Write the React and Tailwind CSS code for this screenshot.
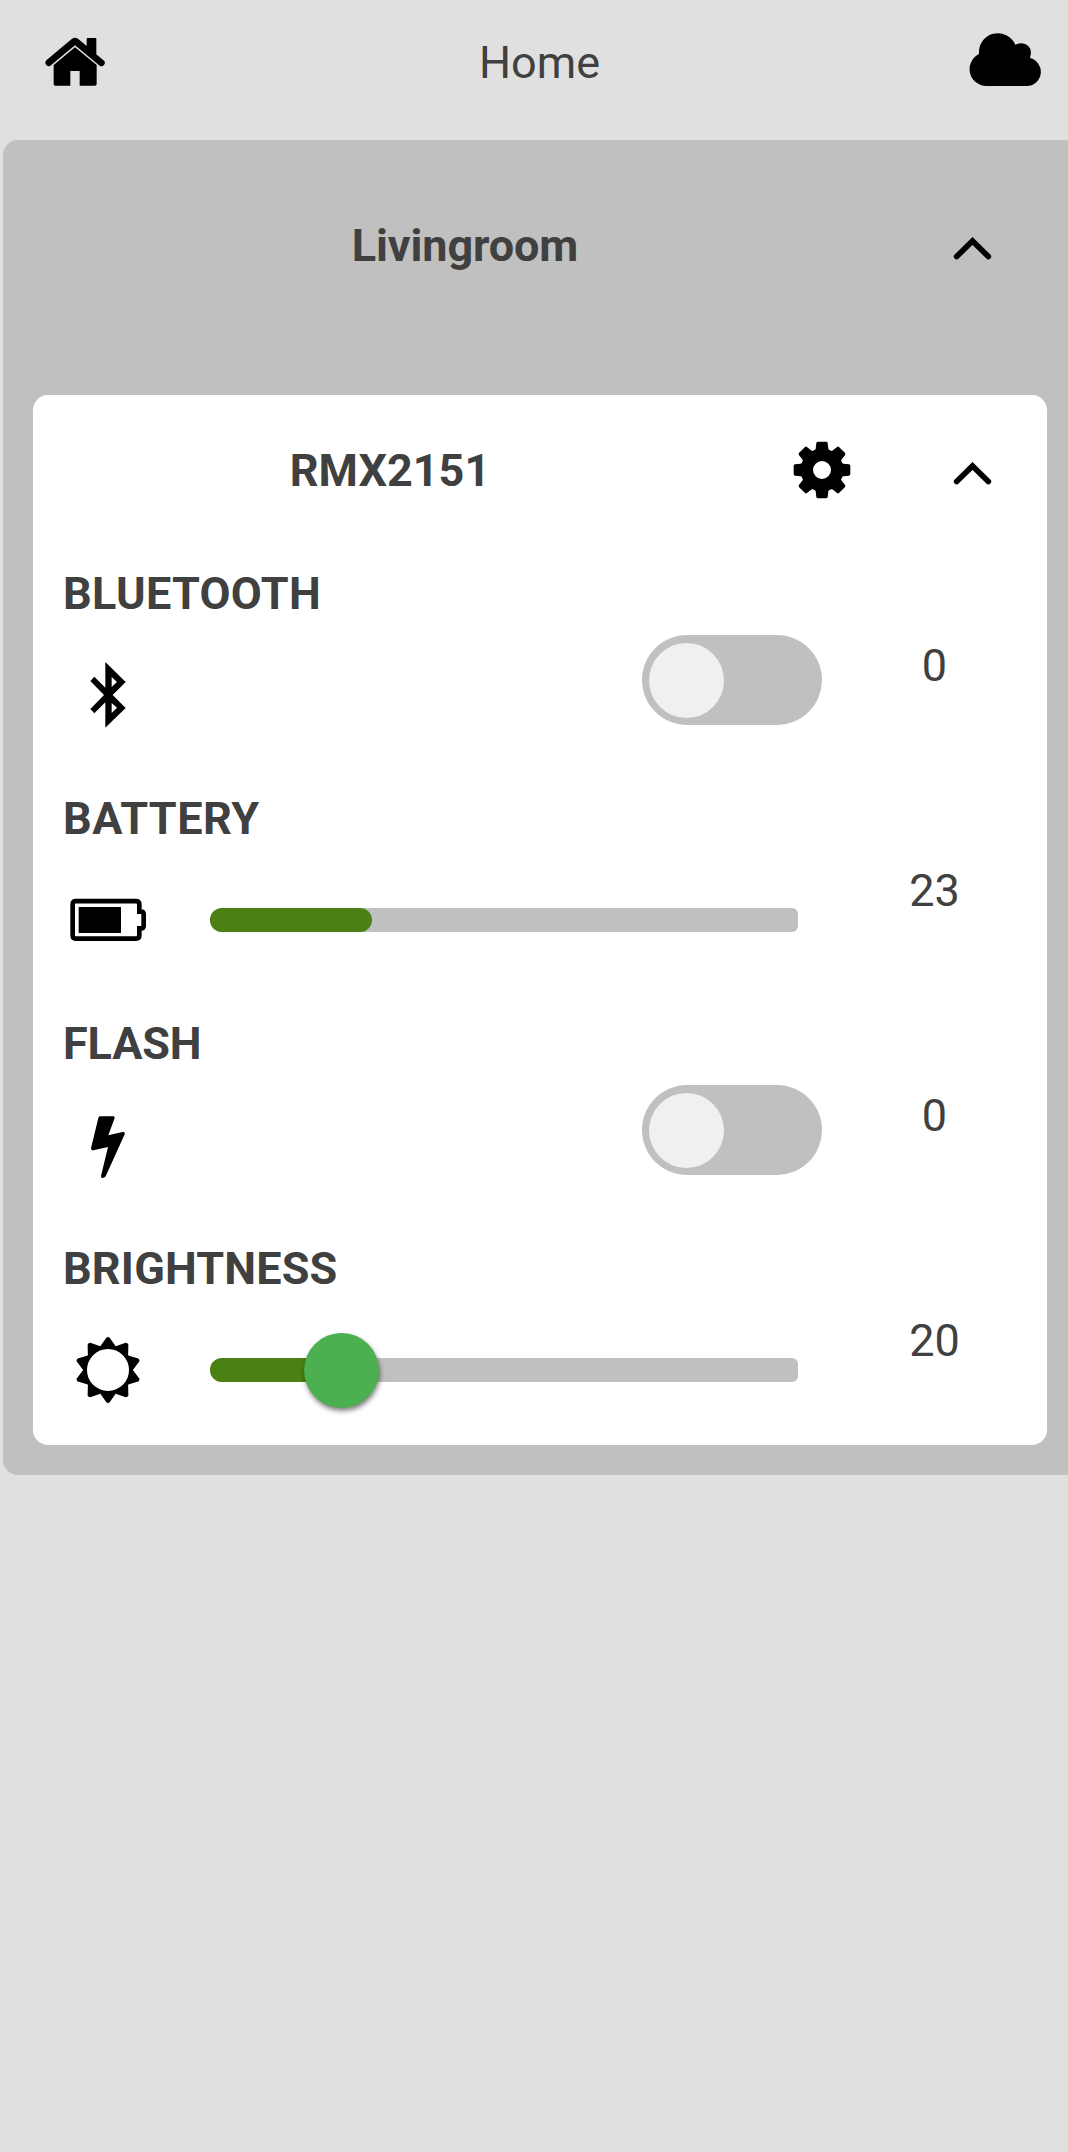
import React from "react";

const HomeIcon = () => (
  <svg className="h-[50px] w-[60px]" viewBox="135 111 180 150">
    <path d="M139 181 L216 116 Q225 110 234 116 L260 138 V117 Q260 114 263 114 H286 Q289 114 289 117 V163 L313 183 Q317 189 312 195 Q306 202 299 197 L225 136 L151 197 Q145 201 139 195 Q133 188 139 181 Z" />
    <path d="M225 142 L290 195 V252 Q290 257 285 257 H239 V213 H211 V257 H166 Q161 257 161 252 V195 Z" />
  </svg>
);

const CloudIcon = () => (
  <svg className="h-[54px] w-[72px]" viewBox="603 98 216 162">
    <path d="M655 257 A50.6 50.6 0 0 1 633 161 A57 57 0 0 1 742 133 Q751 129 761 129 A28 28 0 0 1 789 157 L786 173 A42.6 42.6 0 0 1 776 257 Z" />
  </svg>
);

const ChevronIcon = () => (
  <svg className="h-[24px] w-[39px]" viewBox="577.5 242 117 72">
    <path d="M588.5 303.5 L636 257 L683.5 303.5" fill="none" stroke="#000" strokeWidth="17" strokeLinecap="round" />
  </svg>
);

const GearIcon = () => (
  <svg className="h-[60px] w-[60px]" viewBox="-90 -90 180 180">
    <path
      fillRule="evenodd"
      d="M0 -64 A64 64 0 1 0 0 64 A64 64 0 1 0 0 -64 Z M0 -27 A27 27 0 1 1 0 27 A27 27 0 1 1 0 -27 Z"
    />
    {[0, 45, 90, 135, 180, 225, 270, 315].map((a) => (
      <path
        key={a}
        transform={`rotate(${a})`}
        d="M-27 -56 Q-20 -58 -19 -64 L-17 -81 Q-16 -85 -12 -85 H12 Q16 -85 17 -81 L19 -64 Q20 -58 27 -56 Z"
      />
    ))}
  </svg>
);

const BluetoothIcon = () => (
  <svg className="h-[68px] w-[38px]" viewBox="147 303 114 204">
    <path
      fillRule="evenodd"
      d="M196 306 L257 366 L218 405 L257 444 L196 503 V427 L163 460 L151 447 L192 405 L151 363 L163 350 L196 383 Z M215 351 V381 L231 366 Z M215 429 V459 L231 443 Z"
    />
  </svg>
);

const BatteryIcon = () => (
  <svg className="h-[44px] w-[78px]" viewBox="87 354 234 132">
    <path
      d="M107 363.5 H288 Q298 363.5 298 373.5 V395 H303 Q311 395 311 403 V437 Q311 445 303 445 H298 V466 Q298 476 288 476 H107 Q98 476 98 466 V373.5 Q98 363.5 107 363.5 Z"
      fill="none"
      stroke="#000"
      strokeWidth="14"
    />
    <path d="M116 381 H243 V459 H116 Z" />
  </svg>
);

const FlashIcon = () => (
  <svg className="h-[68px] w-[36px]" viewBox="150 303 108 204">
    <path d="M180 319 H220 Q225 319 224 324 L205 376 L248 366 Q256 365 254 373 L197 499 Q193 504 187 504 Q182 504 183 498 L204 411 L160 421 Q153 422 153 415 L175 324 Q176 319 180 319 Z" />
  </svg>
);

const SunIcon = () => (
  <svg className="h-[68px] w-[68px]" viewBox="-102 -102 204 204">
    <circle r="69" fill="none" stroke="#000" strokeWidth="12" />
    {[0, 36, 72, 108, 144, 180, 216, 252, 288, 324].map((a) => (
      <path key={a} transform={`rotate(${a})`} d="M-23 -71 L-5 -97 Q0 -101 5 -97 L23 -71 L12 -65 H-12 Z" />
    ))}
  </svg>
);

const Toggle = () => (
  <div className="mt-[4px] ml-auto flex h-[90px] w-[180px] items-center rounded-full bg-[#c0c0c0] px-[7.3px]">
    <div className="size-[75px] rounded-full bg-[#f0f0f0]" />
  </div>
);

const Slider = ({ fill, thumb }) => (
  <div className="mt-[52px] ml-[27px] flex h-[24px] w-[588px] items-center rounded-l-[12px] rounded-r-[6px] bg-[#c0c0c0]">
    <div className="h-[24px] rounded-full bg-[#4b8112]" style={{ width: fill }} />
    {thumb && (
      <div className="-ml-[38px] size-[75px] shrink-0 rounded-full bg-[#4caf50] shadow-[1px_3px_5px_rgba(0,0,0,0.5)]" />
    )}
  </div>
);

const Row = ({ label, spacing, icon, value, children }) => (
  <section className="h-[225px] pt-[11px]">
    <h3 className={`pl-[30px] leading-[75px] font-bold ${spacing}`}>{label}</h3>
    <div className="flex">
      <div className="flex h-[128px] w-[150px] items-center justify-center">{icon}</div>
      <div className="flex w-[639px] items-start">{children}</div>
      <div className="w-[225px] text-center leading-[69px]">{value}</div>
    </div>
  </section>
);

export default function App() {
  return (
    <div className="h-[2152px] w-[1068px] overflow-hidden bg-[#e0e0e0] font-['Roboto',sans-serif] text-[45px] text-[#404040]">
      <header className="flex h-[140px] items-start">
        <div className="w-[150px] pt-[37px] pl-[45px]">
          <HomeIcon />
        </div>
        <h1 className="w-[779px] text-center leading-[125px]">Home</h1>
        <div className="pt-[32.67px] pl-[40px]">
          <CloudIcon />
        </div>
      </header>

      <main className="ml-[3px] h-[1335px] w-[1077px] rounded-[15px] bg-[#c0c0c0] px-[30px]">
        <div className="flex h-[255px] items-start pt-[30px]">
          <h2 className="w-[864px] text-center leading-[151px] font-bold tracking-[-0.1px]">Livingroom</h2>
          <div className="flex h-[156px] w-[150px] items-center justify-center">
            <ChevronIcon />
          </div>
        </div>

        <div className="h-[1050px] w-[1014px] rounded-[15px] bg-white">
          <div className="flex h-[150px] items-start">
            <h2 className="w-[714px] text-center leading-[151px] font-bold">RMX2151</h2>
            <div className="flex h-[150px] w-[150px] items-center justify-center">
              <GearIcon />
            </div>
            <div className="flex h-[156px] w-[150px] items-center justify-center">
              <ChevronIcon />
            </div>
          </div>
          <Row label="BLUETOOTH" spacing="tracking-[0.3px]" icon={<BluetoothIcon />} value="0">
            <Toggle />
          </Row>
          <Row label="BATTERY" spacing="tracking-[0.45px]" icon={<BatteryIcon />} value="23">
            <Slider fill="162px" />
          </Row>
          <Row label="FLASH" spacing="tracking-[-0.15px]" icon={<FlashIcon />} value="0">
            <Toggle />
          </Row>
          <Row label="BRIGHTNESS" spacing="tracking-[0.15px]" icon={<SunIcon />} value="20">
            <Slider fill="132px" thumb />
          </Row>
        </div>
      </main>
    </div>
  );
}
